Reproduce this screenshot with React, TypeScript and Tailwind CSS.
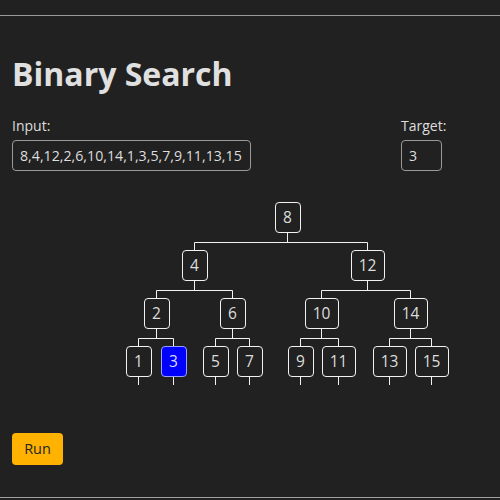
type TreeNode = {
  value: number;
  center: number;
  level: number;
  found?: boolean;
  children?: TreeNode[];
};

const LEVEL_STEP = 48;
const NODE_H = 31;
const JOIN_GAP = 9;
const STUB = 8;

const tree: TreeNode = {
  value: 8,
  center: 287,
  level: 0,
  children: [
    {
      value: 4,
      center: 194,
      level: 1,
      children: [
        {
          value: 2,
          center: 156,
          level: 2,
          children: [
            { value: 1, center: 138, level: 3 },
            { value: 3, center: 173, level: 3, found: true },
          ],
        },
        {
          value: 6,
          center: 232,
          level: 2,
          children: [
            { value: 5, center: 215, level: 3 },
            { value: 7, center: 249, level: 3 },
          ],
        },
      ],
    },
    {
      value: 12,
      center: 367,
      level: 1,
      children: [
        {
          value: 10,
          center: 321,
          level: 2,
          children: [
            { value: 9, center: 300, level: 3 },
            { value: 11, center: 338, level: 3 },
          ],
        },
        {
          value: 14,
          center: 410,
          level: 2,
          children: [
            { value: 13, center: 389, level: 3 },
            { value: 15, center: 431, level: 3 },
          ],
        },
      ],
    },
  ],
};

function flatten(node: TreeNode, acc: TreeNode[] = []) {
  acc.push(node);
  node.children?.forEach((child) => flatten(child, acc));
  return acc;
}

function connectorSegments(node: TreeNode, acc: string[] = []) {
  const top = node.level * LEVEL_STEP;
  const bottom = top + NODE_H;
  const x = node.center + 0.5;
  if (!node.children) {
    acc.push(`M${x} ${bottom} V${bottom + STUB}`);
    return acc;
  }
  const joinY = bottom + JOIN_GAP + 0.5;
  const [left, right] = node.children;
  acc.push(`M${x} ${bottom} V${joinY}`);
  acc.push(`M${left.center + 0.5} ${joinY} H${right.center + 0.5}`);
  node.children.forEach((child) => {
    acc.push(`M${child.center + 0.5} ${joinY} V${child.level * LEVEL_STEP}`);
    connectorSegments(child, acc);
  });
  return acc;
}

function TreeDiagram() {
  const nodes = flatten(tree);
  const paths = connectorSegments(tree);
  return (
    <div className="relative h-[186px] w-full">
      <svg className="absolute inset-0" width="500" height="186">
        {paths.map((d, i) => (
          <path key={i} d={d} stroke="#f2f2f2" strokeWidth="1" fill="none" />
        ))}
      </svg>
      {nodes.map((node) => {
        const width = node.value > 9 ? 34 : 26;
        return (
          <div
            key={node.value}
            className={`absolute flex h-[31px] items-center justify-center rounded-[4px] border text-[15.5px] ${
              node.found
                ? "border-[#9aa0ff] bg-[#0000ff] text-[#dcdcff]"
                : "border-[#f2f2f2] bg-[#212121] text-[#dddddd]"
            }`}
            style={{
              left: node.center - width / 2 + 0.5,
              top: node.level * LEVEL_STEP,
              width,
            }}
          >
            {node.value}
          </div>
        );
      })}
    </div>
  );
}

export default function App() {
  return (
    <div className="flex h-[500px] w-[500px] flex-col overflow-hidden bg-[#212121] font-['Open_Sans',sans-serif] text-[#dddddd]">
      <div className="mt-[15px] h-px bg-[#9a9a9a]" />
      <div className="flex flex-1 flex-col px-3">
        <h1 className="mt-[38px] text-[32px] font-bold leading-[40px] text-[#e0e0e0]">Binary Search</h1>
        <div className="mt-[23px] flex gap-[150px]">
          <div className="flex flex-col">
            <label className="text-[14px] leading-[18px]">Input:</label>
            <div className="mt-[5px] flex h-[31px] w-[239px] items-center rounded-[4px] border border-[#9a9a9a] px-[7px] text-[14.2px]">
              8,4,12,2,6,10,14,1,3,5,7,9,11,13,15
            </div>
          </div>
          <div className="flex flex-col">
            <label className="text-[14px] leading-[18px]">Target:</label>
            <div className="mt-[5px] flex h-[31px] w-[41px] items-center rounded-[4px] border border-[#9a9a9a] px-[7px] text-[14.2px]">
              3
            </div>
          </div>
        </div>
        <div className="-mx-3 mt-[31px]">
          <TreeDiagram />
        </div>
        <div className="mt-[45px]">
          <button className="h-[32px] w-[51px] rounded-[4px] bg-[#ffb300] text-[14.5px] text-[#222222]">Run</button>
        </div>
      </div>
      <div className="mb-[2px] h-px bg-[#a0a0a0]" />
    </div>
  );
}
